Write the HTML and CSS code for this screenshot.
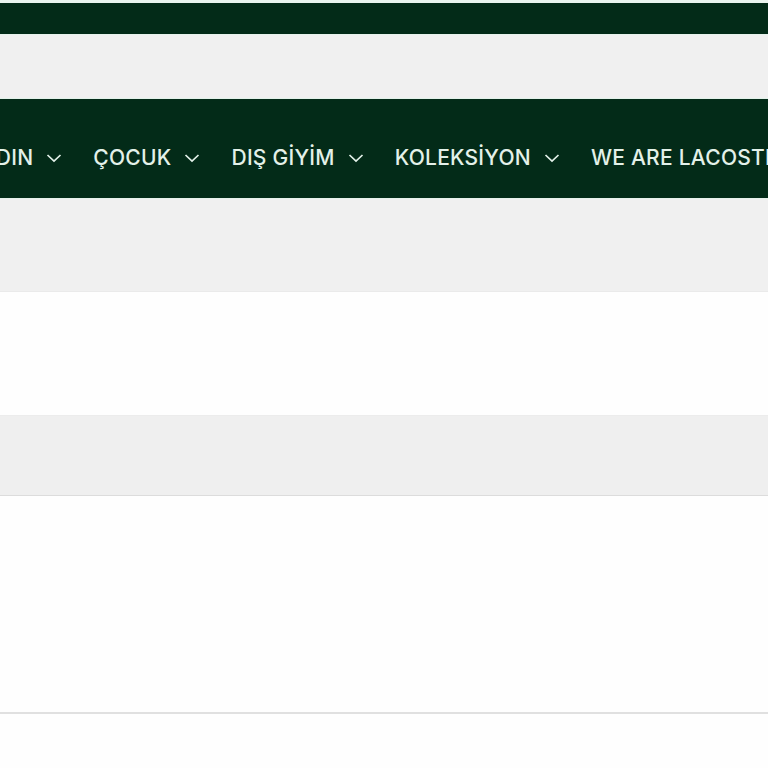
FILE: index.html
```html
<!DOCTYPE html>
<html lang="tr">
<head>
<meta charset="utf-8">
<link rel="stylesheet" href="styles.css">
</head>
<body>
<div class="page">
  <div class="top-edge"></div>
  <div class="promo-bar"></div>
  <div class="utility-bar"></div>
  <nav class="main-nav">
    <ul class="nav-list">
      <li class="nav-item"><span>KADIN</span><svg class="chev" viewBox="0 0 16 10"><path d="M1.5 2 L8 8 L14.5 2"/></svg></li>
      <li class="nav-item"><span>ÇOCUK</span><svg class="chev" viewBox="0 0 16 10"><path d="M1.5 2 L8 8 L14.5 2"/></svg></li>
      <li class="nav-item"><span>DIŞ GİYİM</span><svg class="chev" viewBox="0 0 16 10"><path d="M1.5 2 L8 8 L14.5 2"/></svg></li>
      <li class="nav-item"><span>KOLEKSİYON</span><svg class="chev" viewBox="0 0 16 10"><path d="M1.5 2 L8 8 L14.5 2"/></svg></li>
      <li class="nav-item"><span>WE ARE LACOSTE</span></li>
    </ul>
  </nav>
  <div class="band-gray"></div>
  <div class="band-white"></div>
  <div class="band-gray2"></div>
  <div class="band-white2"></div>
  <div class="band-rest"></div>
</div>
</body>
</html>
```

FILE: styles.css
```css
html, body {
  margin: 0;
  padding: 0;
  background: #fefefe;
}
.page {
  width: 768px;
  overflow: hidden;
  font-family: "Inter", "Open Sans", sans-serif;
}
.top-edge {
  height: 3px;
  background: #eaf4ee;
}
.promo-bar {
  height: 31px;
  background: #032b18;
}
.utility-bar {
  background: #f0f0f0;
  border-top: 1px solid #e6f2ec;
  border-bottom: 1px solid #e2f2ea;
  box-sizing: border-box;
  height: 65px;
}
.main-nav {
  height: 99px;
  background: #032b18;
  display: flex;
  align-items: flex-start;
  box-sizing: border-box;
  padding-top: 46px;
}
.nav-list {
  list-style: none;
  margin: 0 0 0 -34px;
  padding: 0;
  display: flex;
  gap: 31px;
  white-space: nowrap;
}
.nav-item {
  display: flex;
  align-items: center;
  gap: 13px;
  color: #e3f1e9;
  font-size: 21px;
  font-weight: 500;
  letter-spacing: 0.25px;
}
.chev {
  width: 16px;
  height: 10px;
  fill: none;
  stroke: #e3f1e9;
  stroke-width: 1.7;
}
.band-gray {
  height: 93px;
  background: #f0f0f0;
  border-top: 1px solid #e6f2ec;
  box-sizing: border-box;
}
.band-white {
  height: 124px;
  background: #fefefe;
  border-top: 1px solid #eaeaea;
  box-sizing: border-box;
}
.band-gray2 {
  height: 81px;
  background: #efefef;
  border-top: 1px solid #ececec;
  border-bottom: 1px solid #dcdcdc;
  box-sizing: border-box;
}
.band-white2 {
  height: 218px;
  background: #fefefe;
  border-bottom: 2px solid #e0e0e0;
  box-sizing: border-box;
}
.band-rest {
  height: 60px;
  background: #fefefe;
}
```
